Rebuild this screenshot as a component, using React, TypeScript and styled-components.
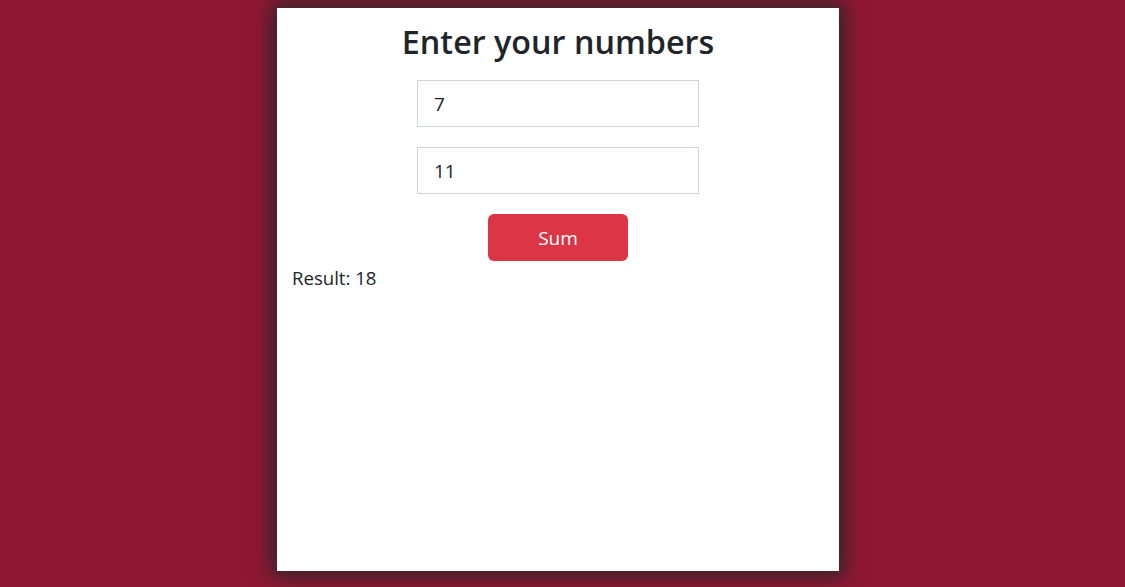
import React, { useState } from "react";
import styled, { createGlobalStyle } from "styled-components";

const Global = createGlobalStyle`
  html, body { margin: 0; padding: 0; }
  body {
    background: #8f1733;
    font-family: "Open Sans", "Noto Sans", sans-serif;
    color: #212529;
  }
  * { box-sizing: border-box; }
`;

const Page = styled.div`
  min-height: 587px;
  padding: 8px 0 16px 277px;
`;

const Card = styled.div`
  width: 562px;
  height: 563px;
  background: #ffffff;
  box-shadow: 0 0 18px 6px rgba(40, 40, 40, 0.9);
  padding: 14px 15px;
  display: flex;
  flex-direction: column;
  align-items: center;
`;

const Title = styled.h2`
  margin: 0 0 20px;
  font-size: 32.3px;
  line-height: 38px;
  font-weight: 600;
  letter-spacing: 0;
  color: #212529;
`;

const Field = styled.input`
  width: 282px;
  height: 47px;
  border: 1px solid #ced4da;
  border-radius: 0;
  padding: 0 16px;
  font-family: inherit;
  font-size: 19px;
  color: #212529;
  margin-bottom: 20px;
  outline: none;
`;

const Button = styled.button`
  width: 140px;
  height: 47px;
  border: none;
  border-radius: 6px;
  background: #dc3545;
  color: #ffffff;
  font-family: inherit;
  font-size: 19px;
  cursor: pointer;
`;

const Result = styled.div`
  align-self: flex-start;
  margin-top: 4px;
  font-size: 18.6px;
  line-height: 26px;
`;

export default function App() {
  const [a, setA] = useState("7");
  const [b, setB] = useState("11");
  const [res, setRes] = useState(18);
  return (
    <>
      <Global />
      <Page>
        <Card>
          <Title>Enter your numbers</Title>
          <Field value={a} onChange={(e) => setA(e.target.value)} />
          <Field value={b} onChange={(e) => setB(e.target.value)} />
          <Button onClick={() => setRes(Number(a) + Number(b))}>Sum</Button>
          <Result>Result: {res}</Result>
        </Card>
      </Page>
    </>
  );
}
